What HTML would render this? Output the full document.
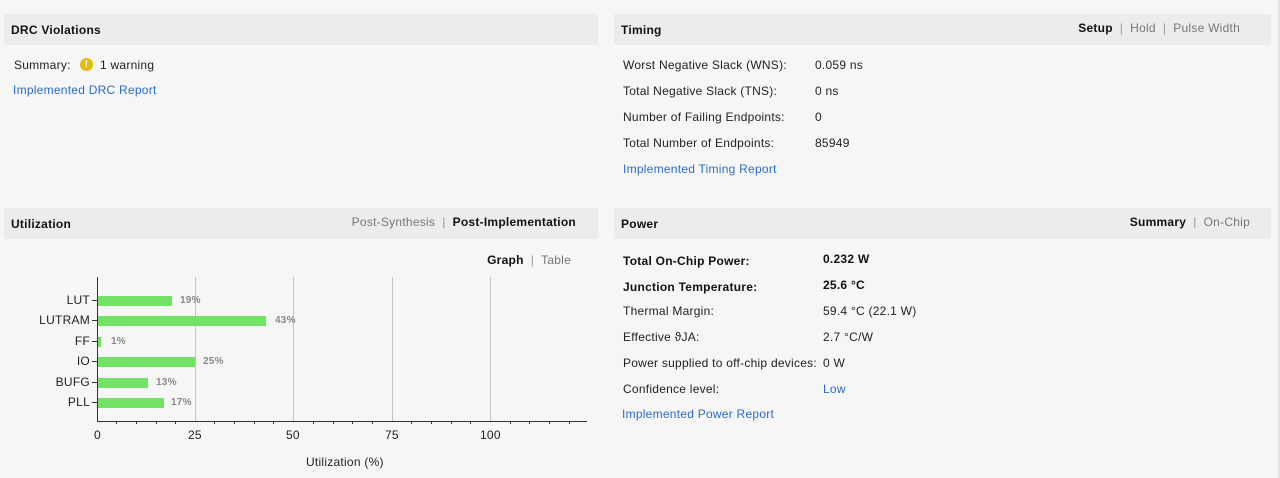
<!DOCTYPE html>
<html><head><meta charset="utf-8"><style>
body{margin:0;width:1280px;height:478px;background:#f6f6f6;font-family:"Liberation Sans",Arial,sans-serif;font-size:12px;color:#222;position:relative;overflow:hidden;letter-spacing:0.25px}
.a{position:absolute;white-space:nowrap}
.hd{position:absolute;background:#ececec;height:31px}
.ht{position:absolute;font-weight:bold;font-size:12px;color:#111}
.lk{color:#2a6cc9}
.g{color:#777}
.b{font-weight:bold;color:#111}
.sep{color:#999;margin:0 7px}
.bar{position:absolute;left:98px;height:10px;background:#71e266}
.pct{position:absolute;font-size:10px;font-weight:bold;color:#888}
.lab{position:absolute;right:1190px;font-size:12px;text-align:right}
.grid{position:absolute;top:277px;height:144px;width:1px;background:#c4c4c4}
</style></head><body>
<div style="position:absolute;right:0;top:0;width:2px;height:478px;background:#e2e2e2"></div>
<div class="hd" style="left:4px;top:14px;width:594px"></div>
<div class="ht" style="left:11px;top:23px">DRC Violations</div>
<div class="a" style="left:14px;top:58px">Summary:</div>
<div class="a" style="left:80px;top:58px;width:13px;height:13px;border-radius:50%;background:#e8b90f;color:#fff;font-weight:bold;font-size:10px;text-align:center;line-height:13px">!</div>
<div class="a" style="left:100px;top:58px">1 warning</div>
<div class="a lk" style="left:13px;top:83px">Implemented DRC Report</div>

<div class="hd" style="left:614px;top:14px;width:657px"></div>
<div class="ht" style="left:621px;top:23px">Timing</div>
<div class="a" style="right:40px;top:21px"><span class="b">Setup</span><span class="sep">|</span><span class="g">Hold</span><span class="sep">|</span><span class="g">Pulse Width</span></div>
<div class="a" style="left:623px;top:58px">Worst Negative Slack (WNS):</div><div class="a" style="left:815px;top:58px">0.059 ns</div>
<div class="a" style="left:623px;top:84px">Total Negative Slack (TNS):</div><div class="a" style="left:815px;top:84px">0 ns</div>
<div class="a" style="left:623px;top:110px">Number of Failing Endpoints:</div><div class="a" style="left:815px;top:110px">0</div>
<div class="a" style="left:623px;top:136px">Total Number of Endpoints:</div><div class="a" style="left:815px;top:136px">85949</div>
<div class="a lk" style="left:623px;top:162px">Implemented Timing Report</div>

<div class="hd" style="left:4px;top:208px;width:594px"></div>
<div class="ht" style="left:11px;top:217px">Utilization</div>
<div class="a" style="right:704px;top:215px"><span class="g">Post-Synthesis</span><span class="sep">|</span><span class="b">Post-Implementation</span></div>
<div class="a" style="right:709px;top:253px"><span class="b">Graph</span><span class="sep">|</span><span class="g">Table</span></div>

<div class="grid" style="left:195px"></div><div class="grid" style="left:293px"></div><div class="grid" style="left:392px"></div><div class="grid" style="left:490px"></div>
<div style="position:absolute;left:97px;top:277px;width:1px;height:145px;background:#333"></div>
<div style="position:absolute;left:97px;top:421px;width:490px;height:1px;background:#333"></div>
<svg style="position:absolute;left:0;top:0" width="600" height="478">
<g stroke="#333" stroke-width="1">
<line x1="92" y1="300.5" x2="97" y2="300.5"/><line x1="92" y1="320.5" x2="97" y2="320.5"/><line x1="92" y1="341.5" x2="97" y2="341.5"/><line x1="92" y1="361.5" x2="97" y2="361.5"/><line x1="92" y1="382.5" x2="97" y2="382.5"/><line x1="92" y1="402.5" x2="97" y2="402.5"/>
<line x1="116.5" y1="422" x2="116.5" y2="424"/><line x1="136.5" y1="422" x2="136.5" y2="424"/><line x1="156.5" y1="422" x2="156.5" y2="424"/><line x1="175.5" y1="422" x2="175.5" y2="424"/>
<line x1="214.5" y1="422" x2="214.5" y2="424"/><line x1="234.5" y1="422" x2="234.5" y2="424"/><line x1="254.5" y1="422" x2="254.5" y2="424"/><line x1="273.5" y1="422" x2="273.5" y2="424"/>
<line x1="313.5" y1="422" x2="313.5" y2="424"/><line x1="333.5" y1="422" x2="333.5" y2="424"/><line x1="352.5" y1="422" x2="352.5" y2="424"/><line x1="372.5" y1="422" x2="372.5" y2="424"/>
<line x1="411.5" y1="422" x2="411.5" y2="424"/><line x1="431.5" y1="422" x2="431.5" y2="424"/><line x1="451.5" y1="422" x2="451.5" y2="424"/><line x1="470.5" y1="422" x2="470.5" y2="424"/>
<line x1="510.5" y1="422" x2="510.5" y2="424"/><line x1="529.5" y1="422" x2="529.5" y2="424"/><line x1="549.5" y1="422" x2="549.5" y2="424"/><line x1="569.5" y1="422" x2="569.5" y2="424"/>
</g></svg>
<div class="lab" style="top:293px">LUT</div><div class="bar" style="top:296px;width:74px"></div><div class="pct" style="left:180px;top:295px">19%</div>
<div class="lab" style="top:313px">LUTRAM</div><div class="bar" style="top:316px;width:168px"></div><div class="pct" style="left:275px;top:315px">43%</div>
<div class="lab" style="top:334px">FF</div><div class="bar" style="top:337px;width:3px"></div><div class="pct" style="left:111px;top:336px">1%</div>
<div class="lab" style="top:354px">IO</div><div class="bar" style="top:357px;width:97px"></div><div class="pct" style="left:203px;top:356px">25%</div>
<div class="lab" style="top:375px">BUFG</div><div class="bar" style="top:378px;width:50px"></div><div class="pct" style="left:156px;top:377px">13%</div>
<div class="lab" style="top:395px">PLL</div><div class="bar" style="top:398px;width:66px"></div><div class="pct" style="left:171px;top:397px">17%</div>
<div class="a" style="left:94px;top:428px">0</div><div class="a" style="left:188px;top:428px">25</div><div class="a" style="left:286px;top:428px">50</div><div class="a" style="left:385px;top:428px">75</div><div class="a" style="left:480px;top:428px">100</div>
<div class="a" style="left:306px;top:455px">Utilization (%)</div>

<div class="hd" style="left:614px;top:208px;width:657px"></div>
<div class="ht" style="left:621px;top:217px">Power</div>
<div class="a" style="right:30px;top:215px"><span class="b">Summary</span><span class="sep">|</span><span class="g">On-Chip</span></div>
<div class="a b" style="left:623px;top:254px">Total On-Chip Power:</div><div class="a b" style="left:823px;top:252px">0.232 W</div>
<div class="a b" style="left:623px;top:280px">Junction Temperature:</div><div class="a b" style="left:823px;top:278px">25.6 °C</div>
<div class="a" style="left:623px;top:304px">Thermal Margin:</div><div class="a" style="left:823px;top:304px">59.4 °C (22.1 W)</div>
<div class="a" style="left:623px;top:330px">Effective ϑJA:</div><div class="a" style="left:823px;top:330px">2.7 °C/W</div>
<div class="a" style="left:623px;top:356px">Power supplied to off-chip devices:</div><div class="a" style="left:823px;top:356px">0 W</div>
<div class="a" style="left:623px;top:382px">Confidence level:</div><div class="a lk" style="left:823px;top:382px">Low</div>
<div class="a lk" style="left:622px;top:407px">Implemented Power Report</div>
</body></html>
